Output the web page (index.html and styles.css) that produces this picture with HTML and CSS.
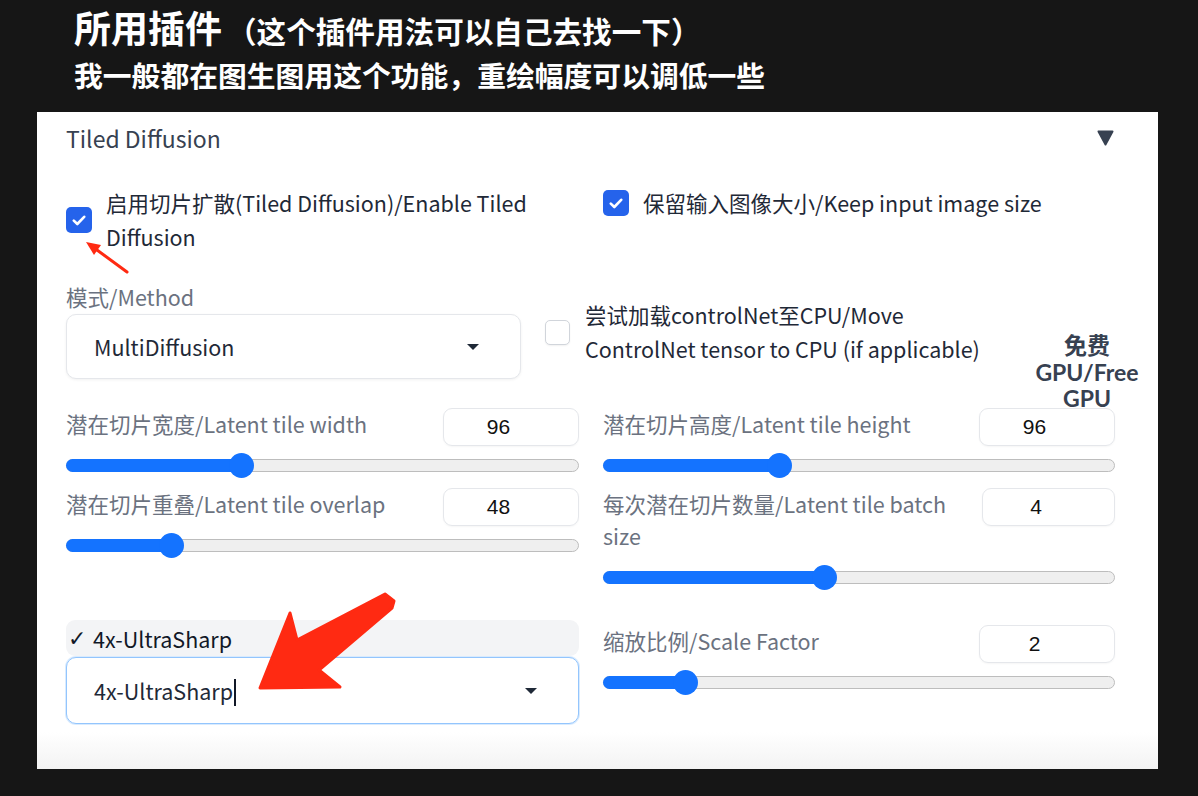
FILE: index.html
```html
<!DOCTYPE html>
<html lang="zh">
<head>
<meta charset="utf-8">
<title>Tiled Diffusion</title>
<link rel="stylesheet" href="styles.css">
</head>
<body>
<div class="top">
  <div class="title"><span>所用插件</span><span class="title-note">（这个插件用法可以自己去找一下）</span></div>
  <div class="subtitle">我一般都在图生图用这个功能，重绘幅度可以调低一些</div>
</div>

<div class="panel">
  <div class="panel-head">
    <span class="panel-title">Tiled Diffusion</span>
    <svg class="collapse" width="17" height="16" viewBox="0 0 17 16"><polygon points="1.5,1.5 15.5,1.5 8.5,14.5" fill="#374151" stroke="#374151" stroke-width="2" stroke-linejoin="round"/></svg>
  </div>

  <div class="row-checks">
    <label class="check">
      <span class="box on"><svg width="14" height="11" viewBox="0 0 14 11"><path d="M1.8 5.6 L5.3 9 L12.2 1.8" fill="none" stroke="#fff" stroke-width="2.6" stroke-linecap="round" stroke-linejoin="round"/></svg></span>
      <span class="check-text">启用切片扩散(Tiled Diffusion)/Enable Tiled Diffusion</span>
    </label>
    <label class="check">
      <span class="box on"><svg width="14" height="11" viewBox="0 0 14 11"><path d="M1.8 5.6 L5.3 9 L12.2 1.8" fill="none" stroke="#fff" stroke-width="2.6" stroke-linecap="round" stroke-linejoin="round"/></svg></span>
      <span class="check-text">保留输入图像大小/Keep input image size</span>
    </label>
  </div>

  <div class="row-method">
    <div class="method">
      <div class="field-label small">模式/Method</div>
      <div class="select">
        <span>MultiDiffusion</span>
        <span class="caret-down"></span>
      </div>
    </div>
    <label class="check cn">
      <span class="box off"></span>
      <span class="check-text narrow">尝试加载controlNet至CPU/Move ControlNet tensor to CPU (if applicable)</span>
    </label>
  </div>

  <div class="grid2">
    <div class="field">
      <div class="field-head">
        <span class="field-label">潜在切片宽度/Latent tile width</span>
        <span class="num">96</span>
      </div>
      <div class="slider"><div class="track"><div class="fill" style="width:34.1%"></div><div class="thumb" style="left:34.1%"></div></div></div>
    </div>
    <div class="field">
      <div class="field-head">
        <span class="field-label">潜在切片高度/Latent tile height</span>
        <span class="num">96</span>
      </div>
      <div class="slider"><div class="track"><div class="fill" style="width:34.4%"></div><div class="thumb" style="left:34.4%"></div></div></div>
    </div>
    <div class="field">
      <div class="field-head">
        <span class="field-label">潜在切片重叠/Latent tile overlap</span>
        <span class="num">48</span>
      </div>
      <div class="slider"><div class="track"><div class="fill" style="width:20.5%"></div><div class="thumb" style="left:20.5%"></div></div></div>
    </div>
    <div class="field">
      <div class="field-head">
        <span class="field-label tall">每次潜在切片数量/Latent tile batch size</span>
        <span class="num slim">4</span>
      </div>
      <div class="slider"><div class="track"><div class="fill" style="width:43.2%"></div><div class="thumb" style="left:43.2%"></div></div></div>
    </div>
  </div>

  <div class="grid2 last">
    <div class="field">
      <div class="option"><span class="tick">✓</span>4x-UltraSharp</div>
      <div class="select focus">
        <span>4x-UltraSharp<span class="text-caret"></span></span>
        <span class="caret-down"></span>
      </div>
    </div>
    <div class="field shift">
      <div class="field-head">
        <span class="field-label">缩放比例/Scale Factor</span>
        <span class="num">2</span>
      </div>
      <div class="slider"><div class="track"><div class="fill" style="width:16%"></div><div class="thumb" style="left:16%"></div></div></div>
    </div>
  </div>
</div>

<div class="gpu-badge">
  <div class="gpu-line">免费</div>
  <div class="gpu-line">GPU/Free</div>
  <div class="gpu-line">GPU</div>
</div>

<svg class="annot" width="1198" height="796" viewBox="0 0 1198 796">
  <polygon points="260,688 290,613 297,640 385,594 394,601 392,608 319,670 340,687" fill="#ff2a12" stroke="#ff2a12" stroke-width="3" stroke-linejoin="round"/>
  <line x1="127" y1="272" x2="97" y2="250" stroke="#ff2a12" stroke-width="3" stroke-linecap="round"/>
  <polygon points="86,242 101,245 94,255" fill="#ff2a12"/>
</svg>
</body>
</html>
```

FILE: styles.css
```css
* { box-sizing: border-box; }

body {
  margin: 0;
  width: 1198px;
  height: 796px;
  overflow: hidden;
  background: #161616;
  font-family: "Noto Sans CJK SC", "Noto Sans", sans-serif;
  position: relative;
}

.top {
  padding: 7px 0 0 74px;
  color: #ffffff;
  font-weight: 700;
}

.title {
  display: flex;
  align-items: baseline;
  height: 40px;
  font-size: 37px;
  line-height: 40px;
}

.title-note {
  margin-left: 5px;
  font-size: 29.6px;
  line-height: 40px;
}

.subtitle {
  margin-top: 9px;
  height: 37px;
  font-size: 28.8px;
  line-height: 37px;
}

.panel {
  margin: 19px 0 0 37px;
  width: 1121px;
  height: 657px;
  padding: 14px 43px 0 29px;
  background: linear-gradient(to bottom, #ffffff 0, #ffffff 620px, #f3f3f3 657px);
}

.panel-head {
  display: flex;
  justify-content: space-between;
  align-items: center;
  height: 24px;
}

.panel-title {
  font-size: 23px;
  line-height: 24px;
  color: #374151;
}

.collapse {
  margin-right: 1px;
}

.row-checks {
  margin-top: 36px;
  display: grid;
  grid-template-columns: 513px 512px;
  column-gap: 24px;
  align-items: start;
}

.check {
  display: flex;
  align-items: center;
  gap: 14px;
}

.check-text {
  font-size: 21.5px;
  line-height: 34px;
  color: #1f2937;
}

.check-text.narrow {
  width: 400px;
}

.box {
  flex-shrink: 0;
  width: 26px;
  height: 26px;
  border-radius: 5px;
  display: flex;
  align-items: center;
  justify-content: center;
}

.box.on {
  background: #2563eb;
}

.box.off {
  width: 25px;
  height: 25px;
  background: #ffffff;
  border: 1px solid #d1d5db;
  box-shadow: 0 1px 2px rgba(0, 0, 0, 0.06);
}

.row-method {
  margin-top: 31px;
  display: flex;
  align-items: center;
}

.method {
  width: 455px;
  margin-right: 24px;
}

.check.cn {
  gap: 15px;
}

.field-label {
  font-size: 21.5px;
  line-height: 32px;
  color: #6b7280;
}

.field-label.small {
  line-height: 24px;
  margin-bottom: 5px;
}

.field-label.tall {
  padding-bottom: 6px;
}

.select {
  height: 65px;
  border: 1px solid #e5e7eb;
  border-radius: 10px;
  box-shadow: 0 1px 3px rgba(0, 0, 0, 0.06);
  display: flex;
  align-items: center;
  justify-content: space-between;
  padding: 0 41px 0 27px;
  font-size: 21.5px;
  color: #1f2937;
  background: #ffffff;
}

.select.focus {
  height: 67px;
  margin-top: 1px;
  border-color: #93c5fd;
  box-shadow: 0 0 0 1px rgba(147, 197, 253, 0.35);
}

.caret-down {
  width: 0;
  height: 0;
  border-left: 6px solid transparent;
  border-right: 6px solid transparent;
  border-top: 6px solid #1f2937;
}

.text-caret {
  display: inline-block;
  width: 2px;
  height: 27px;
  margin-left: 1px;
  background: #111827;
  vertical-align: -6px;
}

.grid2 {
  margin-top: 29px;
  display: grid;
  grid-template-columns: 513px 512px;
  column-gap: 24px;
  row-gap: 4px;
  align-items: start;
}

.grid2.last {
  margin-top: 24px;
}

.field.shift {
  margin-top: 5px;
}

.field-head {
  display: flex;
  justify-content: space-between;
  align-items: flex-start;
  gap: 20px;
}

.num {
  flex-shrink: 0;
  width: 136px;
  height: 38px;
  border: 1px solid #e5e7eb;
  border-radius: 9px;
  box-shadow: 0 1px 2px rgba(0, 0, 0, 0.04);
  display: flex;
  align-items: center;
  justify-content: center;
  padding-right: 25px;
  font-family: "Liberation Sans", Arial, sans-serif;
  font-size: 21px;
  color: #111111;
}

.num.slim {
  width: 133px;
}

.slider {
  height: 38px;
  display: flex;
  align-items: center;
}

.track {
  position: relative;
  width: 100%;
  height: 13px;
  border: 1px solid #bdbdbd;
  border-radius: 7px;
  background: #efefef;
}

.fill {
  position: absolute;
  left: -1px;
  top: -1px;
  bottom: -1px;
  border-radius: 7px;
  background: #1473ff;
}

.thumb {
  position: absolute;
  top: 50%;
  width: 25px;
  height: 25px;
  margin: -12.5px 0 0 -12.5px;
  border-radius: 50%;
  background: #1473ff;
}

.option {
  height: 36px;
  border-radius: 9px;
  background: #f3f4f6;
  display: flex;
  align-items: center;
  padding-left: 2px;
  font-size: 21.5px;
  color: #111827;
}

.tick {
  width: 25px;
  font-family: "DejaVu Sans", sans-serif;
  font-size: 22px;
}

.gpu-badge {
  position: absolute;
  left: 1031px;
  top: 332px;
  width: 112px;
  text-align: center;
  font-family: Lato, "Noto Sans CJK SC", sans-serif;
  font-weight: 700;
  font-size: 23px;
  color: #374151;
}

.gpu-line {
  height: 26.5px;
  line-height: 26.5px;
}

.annot {
  position: absolute;
  left: 0;
  top: 0;
  pointer-events: none;
}
```
